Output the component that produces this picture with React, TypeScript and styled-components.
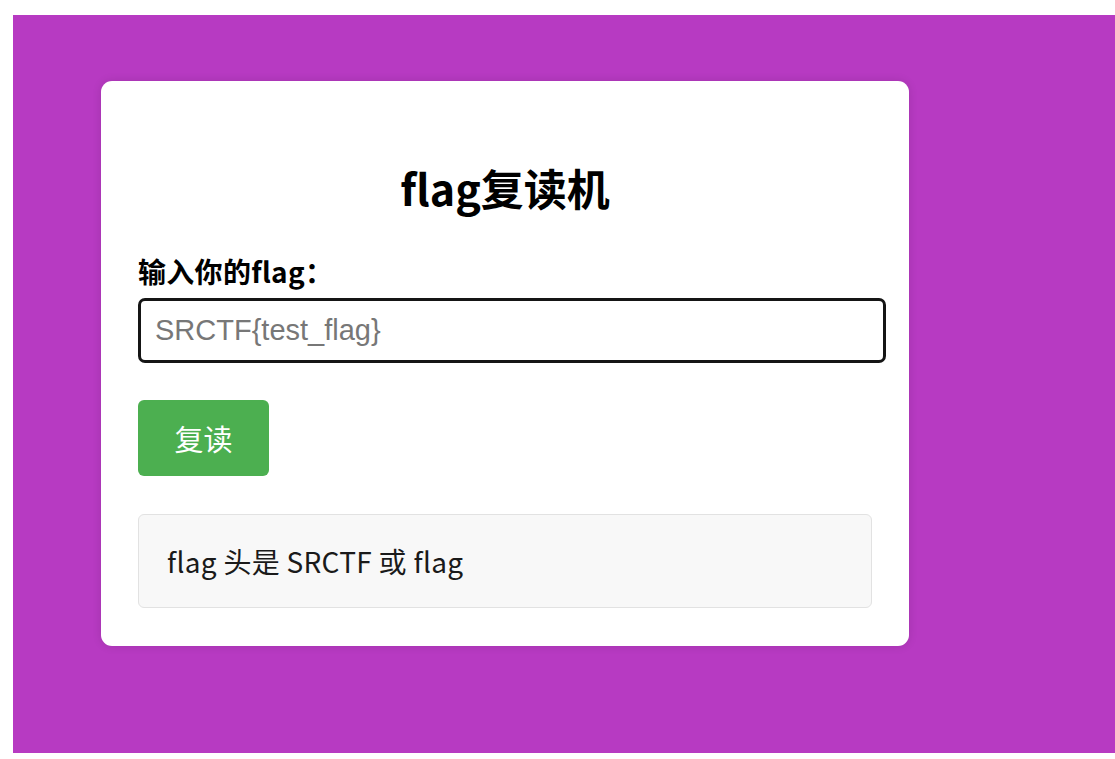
import React from "react";
import styled, { createGlobalStyle } from "styled-components";

const Global = createGlobalStyle`
  html, body { margin: 0; padding: 0; background: #ffffff; }
  * { box-sizing: border-box; }
`;

const Frame = styled.div`
  background: #ffffff;
  padding: 15px 0 6px 13px;
  height: 759px;
`;

const Stage = styled.main`
  background: #b73ac2;
  height: 738px;
  padding: 66px 0 0 88px;
  font-family: "Noto Sans CJK SC", "Noto Sans", sans-serif;
`;

const Card = styled.section`
  width: 808px;
  height: 565px;
  background: #ffffff;
  border-radius: 11px;
  box-shadow: 0 0 10px rgba(0, 0, 0, 0.12);
  padding: 37px 37px 38px;
  display: flex;
  flex-direction: column;
  align-items: flex-start;
`;

const Title = styled.h2`
  align-self: stretch;
  margin: 39px 0 0;
  text-align: center;
  font-size: 43px;
  line-height: 60px;
  font-weight: 700;
  color: #000;
`;

const Label = styled.label`
  margin: 36px 0 9px;
  font-size: 28px;
  line-height: 36px;
  font-weight: 700;
  color: #000;
  letter-spacing: 0.3px;
`;

const Input = styled.input`
  width: calc(100% + 14px);
  height: 65px;
  border: 3px solid #151515;
  border-radius: 7px;
  padding: 0 14px;
  font-family: "Liberation Sans", Arial, sans-serif;
  font-size: 29px;
  color: #000;
  outline: none;
  &::placeholder { color: #777777; }
`;

const Button = styled.button`
  margin-top: 37px;
  width: 131px;
  height: 76px;
  border: none;
  border-radius: 6px;
  background: #4caf50;
  color: #ffffff;
  font-family: "Noto Sans CJK SC", sans-serif;
  font-size: 29px;
  cursor: pointer;
`;

const Message = styled.div`
  margin-top: 38px;
  align-self: stretch;
  height: 94px;
  background: #f8f8f8;
  border: 1px solid #e2e2e2;
  border-radius: 6px;
  padding: 0 28px;
  display: flex;
  align-items: center;
  font-size: 28px;
  letter-spacing: 0.3px;
  color: #1a1a1a;
`;

export default function App() {
  return (
    <>
      <Global />
      <Frame>
        <Stage>
          <Card>
            <Title>flag复读机</Title>
            <Label htmlFor="flag">输入你的flag：</Label>
            <Input id="flag" placeholder="SRCTF{test_flag}" />
            <Button>复读</Button>
            <Message>flag 头是 SRCTF 或 flag</Message>
          </Card>
        </Stage>
      </Frame>
    </>
  );
}
